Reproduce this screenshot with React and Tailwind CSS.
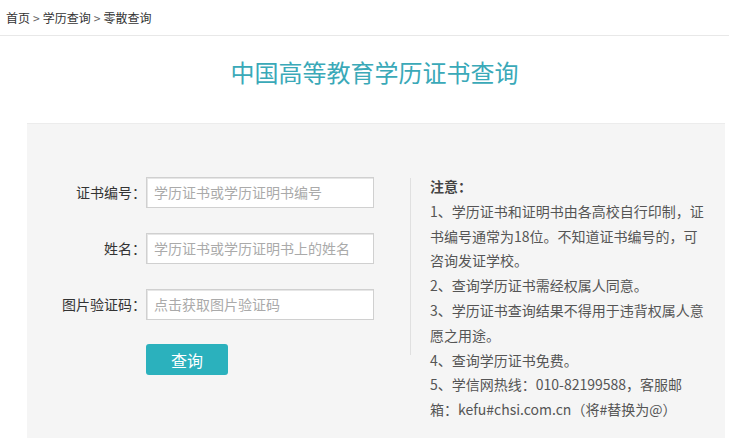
export default function App() {
  const font = { fontFamily: '"Noto Sans CJK SC", "Noto Sans", sans-serif' };
  const rows = [
    { label: "证书编号：", ph: "学历证书或学历证明书编号" },
    { label: "姓名：", ph: "学历证书或学历证明书上的姓名" },
    { label: "图片验证码：", ph: "点击获取图片验证码" },
  ];
  const notes = [
    "1、学历证书和证明书由各高校自行印制，证书编号通常为18位。不知道证书编号的，可咨询发证学校。",
    "2、查询学历证书需经权属人同意。",
    "3、学历证书查询结果不得用于违背权属人意愿之用途。",
    "4、查询学历证书免费。",
    "5、学信网热线：010-82199588，客服邮箱：kefu#chsi.com.cn（将#替换为@）",
  ];
  return (
    <div className="w-[729px] h-[438px] overflow-hidden bg-white" style={font}>
      <div className="h-[36px] border-b border-[#e8e8e8] flex items-center pl-[6px] text-[12px] text-[#333]">
        <span>首页</span>
        <span className="mx-[3px] text-[#666]">&gt;</span>
        <span>学历查询</span>
        <span className="mx-[3px] text-[#666]">&gt;</span>
        <span>零散查询</span>
      </div>
      <div className="h-[87px] flex justify-center pt-[20px] pl-[20px]">
        <h1 className="text-[24px] leading-[32px] text-[#3aa9b8]">中国高等教育学历证书查询</h1>
      </div>
      <div className="ml-[27px] mr-[4px] h-[320px] bg-[#f5f5f5] border-t border-[#ececec] flex">
        <div className="w-[383px] pt-[53px] flex flex-col">
          {rows.map((r, i) => (
            <div key={i} className="flex items-center h-[31px] mb-[25px]">
              <div className="w-[119px] text-right text-[14px] text-[#333]">{r.label}</div>
              <div className="w-[228px] h-[31px] border border-[#d0d0d0] bg-white shadow-[inset_1px_1px_0_#e6e6e6] flex items-center pl-[7px] text-[14px] text-[#aaa]">
                {r.ph}
              </div>
            </div>
          ))}
          <div className="pl-[119px] -mt-[1px]">
            <button className="w-[82px] h-[31px] rounded-[3px] bg-[#2bb1bd] text-white text-[16px]">查询</button>
          </div>
        </div>
        <div className="mt-[54px] w-px h-[177px] bg-[#e0e0e0]" />
        <div className="pl-[19px] pt-[50px] w-[296px] text-[14px] leading-[24.8px] text-[#555]">
          <div className="font-bold text-[#444]">注意：</div>
          {notes.map((n, i) => (
            <div key={i}>{n}</div>
          ))}
        </div>
      </div>
    </div>
  );
}
